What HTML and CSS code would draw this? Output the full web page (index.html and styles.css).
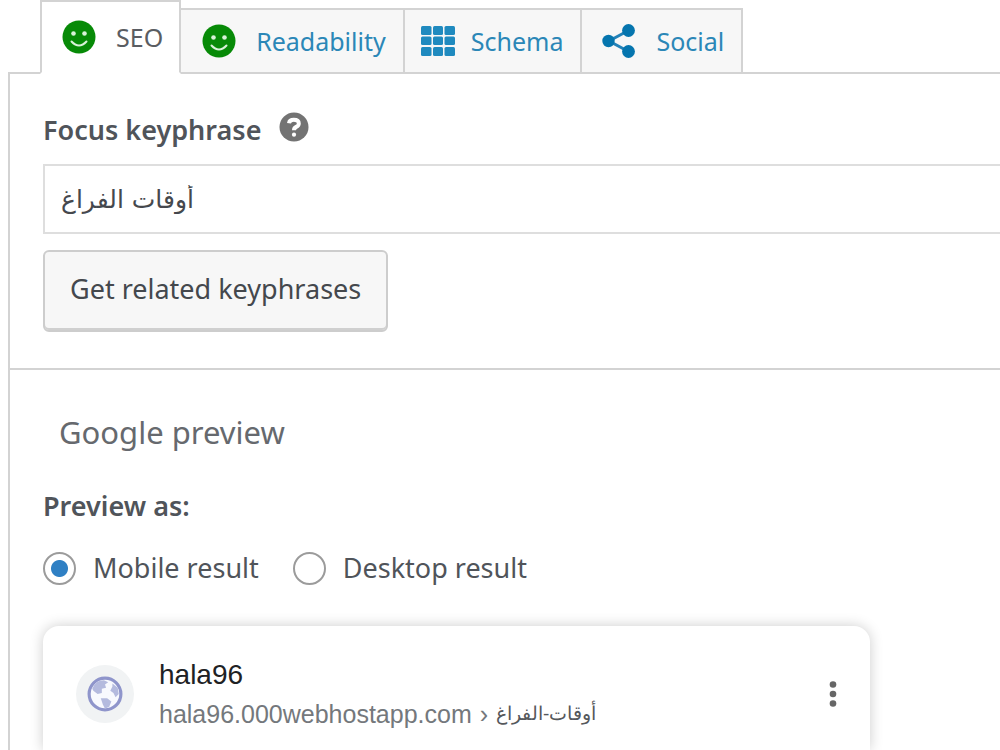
FILE: index.html
```html
<!DOCTYPE html>
<html lang="en">
<head>
<meta charset="utf-8">
<meta name="viewport" content="width=device-width, initial-scale=1">
<title>SEO settings</title>
<link rel="stylesheet" href="styles.css">
</head>
<body>
<main class="metabox">
  <nav class="tabs" aria-label="Sections">
    <a class="tab tab-active" href="#seo">
      <svg class="tab-icon face" viewBox="0 0 34 34" aria-hidden="true"><circle cx="17" cy="17" r="16.500"/><circle class="face-eye" cx="11.500" cy="13.500" r="2.300"/><circle class="face-eye" cx="22.500" cy="13.500" r="2.300"/><path class="face-mouth" d="M9.500 21.500Q17 29.500 24.500 21.500"/></svg>
      <span>SEO</span>
    </a>
    <a class="tab" href="#readability">
      <svg class="tab-icon face" viewBox="0 0 34 34" aria-hidden="true"><circle cx="17" cy="17" r="16.500"/><circle class="face-eye" cx="11.500" cy="13.500" r="2.300"/><circle class="face-eye" cx="22.500" cy="13.500" r="2.300"/><path class="face-mouth" d="M9.500 21.500Q17 29.500 24.500 21.500"/></svg>
      <span>Readability</span>
    </a>
    <a class="tab tab-schema" href="#schema">
      <svg class="tab-icon grid" viewBox="0 0 34 34" aria-hidden="true"><rect x="0" y="2" width="10.500" height="9" rx="1.500"/><rect x="12" y="2" width="10" height="9" rx="1.500"/><rect x="23.500" y="2" width="10.500" height="9" rx="1.500"/><rect x="0" y="12.500" width="10.500" height="8.500" rx="1.500"/><rect x="12" y="12.500" width="10" height="8.500" rx="1.500"/><rect x="23.500" y="12.500" width="10.500" height="8.500" rx="1.500"/><rect x="0" y="23" width="10.500" height="9" rx="1.500"/><rect x="12" y="23" width="10" height="9" rx="1.500"/><rect x="23.500" y="23" width="10.500" height="9" rx="1.500"/></svg>
      <span>Schema</span>
    </a>
    <a class="tab tab-social" href="#social">
      <svg class="tab-icon share" viewBox="0 0 34 34" aria-hidden="true"><path d="M26.500 6.500L7 17L26.500 27.500"/><circle cx="6.500" cy="17" r="6.200"/><circle cx="26.500" cy="6.500" r="6.400"/><circle cx="26.500" cy="27.500" r="6.400"/></svg>
      <span>Social</span>
    </a>
  </nav>

  <div class="panel">
    <section class="keyphrase">
      <div class="field-head">
        <label class="field-label" for="keyphrase">Focus keyphrase</label>
        <a class="help" href="#help" aria-label="Help">
          <svg viewBox="0 0 30 30" aria-hidden="true"><circle cx="15" cy="15" r="14.500"/><path class="help-hook" d="M10 11.200Q10.500 7.800 14.800 7.800Q19.800 7.800 19.800 11.400Q19.800 13.600 17.200 14.900Q15 16 15 18.200"/><circle class="help-dot" cx="15" cy="22.700" r="2.100"/></svg>
        </a>
      </div>
      <input class="text-input" id="keyphrase" type="text" value="أوقات الفراغ">
      <button class="button" type="button">Get related keyphrases</button>
    </section>

    <section class="preview">
      <h2 class="preview-title">Google preview</h2>
      <fieldset class="modes">
        <legend class="field-label">Preview as:</legend>
        <div class="mode-row">
          <input class="radio" type="radio" name="mode" id="mobile" checked>
          <label class="mode-label" for="mobile">Mobile result</label>
          <input class="radio" type="radio" name="mode" id="desktop">
          <label class="mode-label" for="desktop">Desktop result</label>
        </div>
      </fieldset>
      <article class="card">
        <span class="favicon">
          <svg viewBox="0 0 34 34" aria-hidden="true"><circle class="globe-ring" cx="17" cy="17" r="15"/><path class="globe-land" d="M5 12Q8 4 16 4L20 6L17 8L18 11L14 12L14 16L10 17L6 14Z"/><path class="globe-land" d="M24 7L29 11L30 17L27 20L25 16L22 14L24 10Z"/><path class="globe-land" d="M13 21L19 21L23 24L21 29L17 31L15 27Z"/></svg>
        </span>
        <div class="site">
          <div class="site-name">hala96</div>
          <div class="site-url"><span>hala96.000webhostapp.com</span><span class="crumb">›</span><bdi class="slug" lang="ar">أوقات-الفراغ</bdi></div>
        </div>
        <svg class="more" viewBox="0 0 8 28" aria-hidden="true"><circle cx="4" cy="4.500" r="3.300"/><circle cx="4" cy="14" r="3.300"/><circle cx="4" cy="23.500" r="3.300"/></svg>
      </article>
    </section>
  </div>
</main>
</body>
</html>
```

FILE: styles.css
```css
* {
  box-sizing: border-box;
}

body {
  margin: 0;
  background: #fff;
  color: #50545a;
  font: 27px/36px "Noto Sans", "Open Sans", sans-serif;
}

.metabox {
  display: flex;
  flex-direction: column;
  min-height: 100vh;
  padding-left: 8px;
}

.tabs {
  position: relative;
  z-index: 1;
  display: flex;
  align-items: flex-end;
  padding-left: 32px;
  margin-bottom: -2px;
  font-size: 25px;
}

.tab {
  display: flex;
  align-items: center;
  gap: 20px;
  height: 66px;
  padding: 0 17px 0 21px;
  border: 2px solid #d3d3d3;
  border-left: 0;
  background: #f7f7f7;
  color: #2b87b7;
  text-decoration: none;
}

.tab-active {
  height: 74px;
  padding: 0 16px 0 20px;
  border-left: 2px solid #d3d3d3;
  border-bottom-color: #fff;
  background: #fff;
  color: #5a5d62;
}

.tab-schema {
  gap: 16px;
  padding-left: 16px;
}

.tab-social {
  padding-left: 20px;
}

.tab-icon {
  flex: none;
  width: 34px;
  height: 34px;
}

.face {
  fill: #078a07;
}

.face-eye {
  fill: #d9f2d9;
}

.face-mouth {
  fill: none;
  stroke: #d9f2d9;
  stroke-width: 2;
  stroke-linecap: round;
}

.grid {
  fill: #1f8abf;
}

.share {
  fill: #0575ae;
}

.share path {
  fill: none;
  stroke: #2382b8;
  stroke-width: 3;
}

.panel {
  display: flex;
  flex: 1;
  flex-direction: column;
  border: solid #d3d3d3;
  border-width: 2px 0 0 2px;
}

.keyphrase {
  padding: 38px 0 36px 33px;
  border-bottom: 2px solid #d3d3d3;
}

.field-head {
  display: flex;
  align-items: flex-start;
  gap: 18px;
  margin-bottom: 16px;
}

.field-label {
  padding: 0;
  color: #50545a;
  font-weight: 600;
}

.help {
  display: flex;
}

.help svg {
  width: 30px;
  height: 30px;
  fill: #737373;
}

.help-hook {
  fill: none;
  stroke: #fff;
  stroke-width: 4;
}

.help .help-dot {
  fill: #fff;
}

.text-input {
  display: block;
  width: 100%;
  height: 70px;
  padding: 0 16px;
  border: 2px solid #dedede;
  border-right: 0;
  background: #fff;
  color: #45484d;
  font: 25px/36px "DejaVu Sans", sans-serif;
}

.button {
  display: block;
  height: 82px;
  margin-top: 16px;
  padding: 0 25px 4px;
  border: 2px solid #cdcdcd;
  border-radius: 6px;
  background: #f7f7f7;
  box-shadow: inset 0 -2px 0 #d0d0d0;
  color: #44484d;
  font: inherit;
}

.preview {
  display: flex;
  flex: 1;
  flex-direction: column;
  padding: 42px 33px 0;
}

.preview-title {
  margin: 0 0 36px 16px;
  color: #66696e;
  font-size: 31px;
  font-weight: 400;
  line-height: 40px;
}

.modes {
  min-width: 0;
  margin: 0;
  padding: 0;
  border: 0;
}

.mode-row {
  display: flex;
  align-items: center;
  margin: 26px 0 40px;
}

.radio {
  appearance: none;
  width: 33px;
  height: 33px;
  margin: 0;
  border: 2px solid #9b9b9b;
  border-radius: 50%;
  background: #fff;
}

.radio:checked {
  background: radial-gradient(circle, #2f80c4 8px, #fff 9px);
}

.mode-label {
  margin: 0 34px 0 17px;
}

.card {
  display: flex;
  flex: 1;
  align-items: flex-start;
  max-width: 827px;
  min-height: 124px;
  padding: 32px 33px 0;
  border-radius: 16px 16px 0 0;
  box-shadow: 0 0 14px rgba(0, 0, 0, 0.2);
  clip-path: inset(-20px -20px 0);
  font-family: "Liberation Sans", Arial, sans-serif;
}

.favicon {
  display: flex;
  flex: none;
  align-items: center;
  justify-content: center;
  width: 58px;
  height: 58px;
  margin: 7px 25px 0 0;
  border-radius: 50%;
  background: #f1f3f4;
}

.favicon svg {
  width: 36px;
  height: 36px;
}

.globe-ring {
  fill: #f8f9fe;
  stroke: #8f95cb;
  stroke-width: 3;
}

.globe-land {
  fill: #b4bade;
}

.site {
  flex: 1;
  min-width: 0;
}

.site-name {
  color: #202124;
  font-size: 28px;
  line-height: 34px;
}

.site-url {
  display: flex;
  align-items: center;
  gap: 8px;
  color: #74787c;
  font-size: 25px;
  line-height: 44px;
  white-space: nowrap;
}

.slug {
  color: #55585c;
  font-size: 19px;
}

.more {
  flex: none;
  width: 8px;
  height: 28px;
  margin-top: 22px;
  fill: #666;
}
```
